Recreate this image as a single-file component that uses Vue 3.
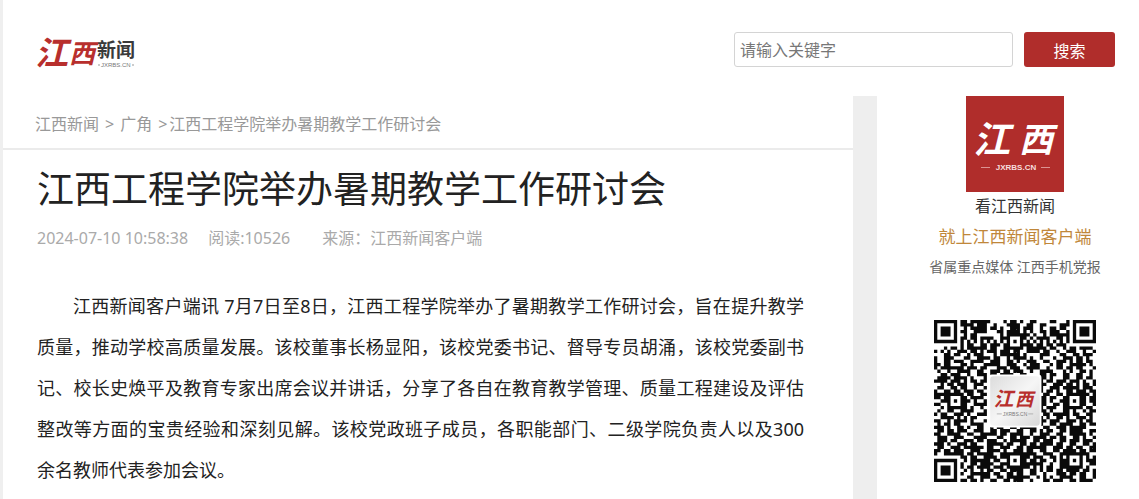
<script setup>
import { ref } from 'vue'

const keyword = ref('')

const paragraph =
  '江西新闻客户端讯 7月7日至8日，江西工程学院举办了暑期教学工作研讨会，旨在提升教学质量，推动学校高质量发展。该校董事长杨显阳，该校党委书记、督导专员胡涌，该校党委副书记、校长史焕平及教育专家出席会议并讲话，分享了各自在教育教学管理、质量工程建设及评估整改等方面的宝贵经验和深刻见解。该校党政班子成员，各职能部门、二级学院负责人以及300余名教师代表参加会议。'

const SIZE = 49
const modules = [
  '#######.##.######....#.##.#..##....##...#.#######',
  '#.....#.####.###..#...####..##..##....###.#.....#',
  '#.###.#..#.#####.##.#..###.###..#..##.##..#.###.#',
  '#.###.#.##..####...##.####.#.#..##.###..#.#.###.#',
  '#.###.#..#.##.......#.####.##.#..#.######.#.###.#',
  '#.....#.##.##.####..#####.##.#.####..##.#.#.....#',
  '#######.#.#.#.#.#.#.#.#.#.#.#.#.#.#.#.#.#.#######',
  '........#.##..##.###.##...####.##.##.###.........',
  '...#.##.#.######.##..#####..######.##..#.##.####.',
  '#.#.#..###.##.#.###.###.##..####.##..#..###..#..#',
  '...##.##..#.###...#.######.#....###...##..##.###.',
  '#..###...##..####.##..#.####.#..#...#..###.##.#..',
  '#..##.###..####..###..##.#..###..##..###.#.##.##.',
  '##.##...##.#...#####..###..#.###...#.##..#####.#.',
  '#.#######.###.##...###.###..####..#..##.##.##...#',
  '.#..#..####..##..###.##.###..#..####...#.#..##.#.',
  '..##.###..#..###.##.####..##....##.##..##..##..#.',
  '.####.####.#...#................##.#...##..##.##.',
  '####.###.#.##.##................#.##.###.###.#..#',
  '..#.##.###..###.................##..###.##.#.##.#',
  '.##..##.##..#..#................#..###.#####.###.',
  '#..##.##.###.##.................#.##.#..##.###.##',
  '#####.###.##..##.................##..##..######.#',
  '##.##...##.####.................##.##..##...##.##',
  '..###.#.###.#..#................##.#..###.#.##.##',
  '##..#...##..####................##..##.##...##..#',
  '..#.######.#..#.................#.###..######.##.',
  '.#..##..####...#................##.#...##.#..#.##',
  '#.##..###.#..###.................##.#####.##..##.',
  '..####.#.#.##...................#.#..##.#..###.#.',
  '##..#.####.#...#................##.###..###.#.##.',
  '.#.##.##...####.................#..##.####..##.##',
  '###.#..##.#..##..#.##..##.#####..##..###.#####...',
  '.##.##.###..###..##.###..##..##.#.##..##.####..##',
  '##..####..##..#####.##.####..#..###..##..#####.#.',
  '.###..###...####...##..##.###.####.##.##..##.#..#',
  '.###.##..###.##.###..#.#####..##.###..##.###.###.',
  '###.#..###.##...#####.##..##.##.####.##..##..##.#',
  '.##..###.######.##..###..##.######..###.##.##..##',
  '##.##.###..###..####.#..###.##..##..##.####.##.##',
  '#..######.##.#####..##.########..###..######.##.',
  '........##.##..####.##.#...##.###..##.#.#...#.#.#',
  '#######..#.######.##..##.#.#.##.##..#.###.#.#.###',
  '#.....#.#..##.####..##.#...######..#..###...#..##',
  '#.###.#.#.##.####.###.#######.#.#.##..#######.#..',
  '#.###.#..#.#..#.##..##.####..##.#.##.##.####.##.#',
  '#.###.#.#..######.##..##.##..##..#...###.##.##..#',
  '#.....#...##..###..##.#######..#.#.#..####..##..#',
  '#######.##.##.#..##..##.###..#...##.###..##.####.'
]

const isFinder = (r, c) =>
  (r < 8 && (c < 8 || c > SIZE - 9)) || (r > SIZE - 9 && c < 8)

const anchors = [[6, 24], [24, 6], [24, 42], [42, 24], [42, 42]]

function alignment(r, c) {
  for (const [ar, ac] of anchors) {
    const d = Math.max(Math.abs(r - ar), Math.abs(c - ac))
    if (d <= 2) return d !== 1
  }
  return null
}

function qrPath() {
  let d = ''
  for (let r = 0; r < SIZE; r++) {
    for (let c = 0; c < SIZE; c++) {
      if (isFinder(r, c)) continue
      const mark = alignment(r, c)
      const dark = mark === null ? modules[r][c] === '#' : mark
      if (dark) d += `M${c} ${r}h1v1h-1z`
    }
  }
  return d
}

const qr = qrPath()
const finders = [[0, 0], [42, 0], [0, 42]]
</script>

<template>
  <div class="page">
    <header class="top">
      <a class="brand" href="#" aria-label="江西新闻">
        <svg width="104" height="48" viewBox="0 0 104 48">
          <text class="brush red" x="0" y="39" font-size="33">江</text>
          <text class="brush red" x="34" y="37" font-size="26">西</text>
          <text class="news" x="62" y="31" font-size="19">新闻</text>
          <text class="tiny" x="66" y="41" font-size="6">JXRBS.CN</text>
          <path d="M63 39h2M97 39h2" stroke="#999" />
        </svg>
      </a>
      <form class="search" @submit.prevent>
        <input v-model="keyword" type="text" placeholder="请输入关键字" aria-label="请输入关键字" />
        <button type="submit">搜索</button>
      </form>
    </header>

    <div class="columns">
      <main>
        <nav class="crumbs">
          <a href="#">江西新闻</a><span class="sep">&gt;</span><a href="#">广角</a><span class="sep last">&gt;</span><span>江西工程学院举办暑期教学工作研讨会</span>
        </nav>
        <article>
          <h1>江西工程学院举办暑期教学工作研讨会</h1>
          <div class="meta">
            <span>2024-07-10 10:58:38</span>
            <span>阅读:10526</span>
            <span class="source">来源：江西新闻客户端</span>
          </div>
          <p class="body">{{ paragraph }}</p>
        </article>
      </main>

      <aside>
        <svg class="app-icon" width="98" height="96" viewBox="0 0 98 96">
          <rect width="98" height="96" fill="#b02d2b" />
          <text class="brush white" x="7" y="57" font-size="37">江</text>
          <text class="brush white" x="53" y="56" font-size="34">西</text>
          <text class="domain" x="50" y="74" font-size="8" text-anchor="middle">JXRBS.CN</text>
          <path d="M15 71.500h9M75 71.500h9" stroke="#dc9391" />
        </svg>
        <div class="slogan">看江西新闻</div>
        <div class="client">就上江西新闻客户端</div>
        <div class="media">省属重点媒体 江西手机党报</div>
        <svg class="qr" width="162" height="162" viewBox="0 0 49 49" role="img" aria-label="二维码">
          <defs>
            <linearGradient id="plate" x1="0" y1="0" x2="1" y2="1">
              <stop offset="0" stop-color="#dcdcdc" />
              <stop offset="0.5" stop-color="#f6f6f6" />
              <stop offset="1" stop-color="#d8d8d8" />
            </linearGradient>
          </defs>
          <path :d="qr" fill="#0a0a0a" />
          <g v-for="([x, y], i) in finders" :key="i" :transform="`translate(${x} ${y})`">
            <path d="M0 0h7v7h-7zM1 1v5h5v-5zM2 2h3v3h-3z" fill="#0a0a0a" fill-rule="evenodd" />
          </g>
          <rect x="16.500" y="16.500" width="16" height="16" rx="1" fill="#fff" />
          <rect x="17" y="17" width="15" height="15" rx="1" fill="url(#plate)" />
          <text class="brush red" x="18" y="26" font-size="6">江</text>
          <text class="brush red" x="24.500" y="26" font-size="5.500">西</text>
          <text class="tiny" x="24.500" y="29" font-size="1.500" text-anchor="middle">JXRBS.CN</text>
          <path d="M19 28.400h1.500M28.500 28.400h1.500" stroke="#999" stroke-width="0.200" />
        </svg>
      </aside>
    </div>
  </div>
</template>

<style>
body {
  margin: 0;
  background: #fff;
}
</style>

<style scoped>
* {
  box-sizing: border-box;
}

.page {
  display: flex;
  flex-direction: column;
  min-height: 100vh;
  border-left: 3px solid #efefef;
  font-family: "Noto Sans", "Noto Sans CJK SC", sans-serif;
  color: #222;
}

a {
  color: inherit;
  text-decoration: none;
}

.top {
  display: flex;
  justify-content: space-between;
  align-items: flex-start;
  height: 96px;
  padding: 0 24px 0 32px;
}

.brand {
  display: block;
  margin-top: 26px;
  height: 48px;
}

.brush {
  font-family: "Noto Sans CJK SC", sans-serif;
  font-weight: 700;
  font-style: italic;
}

.red {
  fill: #b82f2d;
}

.white {
  fill: #fff;
}

.news {
  font-family: "Noto Sans CJK SC", sans-serif;
  font-weight: 700;
  fill: #3a3a3a;
}

.tiny {
  font-family: "Liberation Sans", sans-serif;
  fill: #777;
}

.domain {
  font-family: "Liberation Sans", sans-serif;
  font-weight: 700;
  fill: #f6dedd;
}

.search {
  display: flex;
  gap: 11px;
  margin-top: 32px;
}

.search input {
  width: 279px;
  height: 35px;
  padding: 0 5px;
  border: 1px solid #d4d4d4;
  border-radius: 3px;
  outline: none;
  font: inherit;
  font-size: 16px;
  color: #333;
}

.search input::placeholder {
  color: #777;
}

.search button {
  width: 91px;
  height: 35px;
  padding: 0;
  border: 0;
  border-radius: 3px;
  background: #b02d2b;
  color: #fff;
  font: inherit;
  font-size: 16px;
}

.columns {
  display: grid;
  grid-template-columns: minmax(0, 1fr) 286px;
  flex: 1;
}

.crumbs {
  padding: 16px 32px 12px;
  border-bottom: 2px solid #ebebeb;
  font-size: 16px;
  line-height: 24px;
  color: #999;
}

.sep {
  margin: 0 6px;
}

.sep.last {
  margin-right: 2px;
}

article {
  padding: 12px 49px 8px 34px;
}

h1 {
  margin: 0;
  font-size: 37px;
  font-weight: 400;
  line-height: 54px;
}

.meta {
  display: flex;
  gap: 20px;
  margin-top: 10px;
  font-size: 16px;
  line-height: 24px;
  color: #aaa;
}

.source {
  margin-left: 12px;
}

.body {
  margin: 36px 0 0;
  font-size: 18px;
  line-height: 41px;
  text-indent: 2em;
  text-align: justify;
}

aside {
  display: flex;
  flex-direction: column;
  align-items: center;
  padding-left: 14px;
  border-left: 24px solid #eee;
}

.app-icon,
.qr {
  display: block;
}

.slogan {
  font-size: 16px;
  line-height: 28px;
  color: #333;
}

.client {
  font-size: 17px;
  line-height: 34px;
  color: #c0873a;
}

.media {
  font-size: 14px;
  line-height: 26px;
  color: #666;
}

.qr {
  margin-top: 40px;
}
</style>
